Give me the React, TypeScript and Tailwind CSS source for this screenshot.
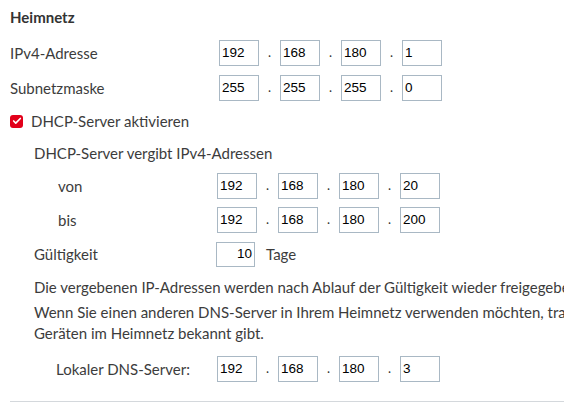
import { Check } from "lucide-react";

const font = { fontFamily: "Lato, 'Open Sans', sans-serif" };

function IpInputs({ parts, className = "" }: { parts: string[]; className?: string }) {
  return (
    <div className={`flex items-center ${className}`}>
      {parts.map((p, i) => (
        <div key={i} className="flex items-center">
          {i > 0 && <span className="w-[21px] text-center text-[13px] text-[#333]">.</span>}
          <div className="w-[40px] h-[26px] border border-[#a9b8c4] bg-white flex items-center pl-[2px] font-['Liberation_Sans',sans-serif] text-[13.5px] text-black">
            {p}
          </div>
        </div>
      ))}
    </div>
  );
}

export default function App() {
  return (
    <div
      className="w-[564px] h-[407px] overflow-hidden bg-white text-[15px] text-[#3c3c3c] font-['Lato','Open_Sans',sans-serif]"
      style={font}
    >
      <div className="pl-[10px] pt-[6px]">
        <div className="h-[22px] flex items-center font-bold text-[#333]">Heimnetz</div>

        <div className="mt-[12px] flex items-center h-[26px]">
          <span className="w-[209px]">IPv4-Adresse</span>
          <IpInputs parts={["192", "168", "180", "1"]} />
        </div>
        <div className="mt-[9px] flex items-center h-[26px]">
          <span className="w-[209px]">Subnetzmaske</span>
          <IpInputs parts={["255", "255", "255", "0"]} />
        </div>

        <div className="mt-[8px] flex items-center h-[24px]">
          <span className="w-[13px] h-[13px] rounded-[3px] bg-[#e2001a] flex items-center justify-center">
            <Check size={10} strokeWidth={4} className="text-white" />
          </span>
          <span className="ml-[8px]">DHCP-Server aktivieren</span>
        </div>

        <div className="pl-[24px]">
          <div className="mt-[9px] h-[22px] flex items-center">DHCP-Server vergibt IPv4-Adressen</div>

          <div className="mt-[9px] flex items-center h-[26px]">
            <span className="w-[183px] pl-[24px]">von</span>
            <IpInputs parts={["192", "168", "180", "20"]} />
          </div>
          <div className="mt-[8px] flex items-center h-[26px]">
            <span className="w-[183px] pl-[24px]">bis</span>
            <IpInputs parts={["192", "168", "180", "200"]} />
          </div>

          <div className="mt-[9px] flex items-center h-[25px]">
            <span className="w-[182px]">Gültigkeit</span>
            <div className="w-[39px] h-[25px] border border-[#a9b8c4] flex items-center justify-end pr-[2px] font-['Liberation_Sans',sans-serif] text-[13.5px] text-black">
              10
            </div>
            <span className="ml-[11px]">Tage</span>
          </div>

          <p className="mt-[10px] leading-[21px] whitespace-nowrap">
            Die vergebenen IP-Adressen werden nach Ablauf der Gültigkeit wieder freigegeben.
          </p>
          <p className="mt-[4px] leading-[21px] whitespace-nowrap">
            Wenn Sie einen anderen DNS-Server in Ihrem Heimnetz verwenden möchten, tragen Sie hier dessen IPv4-Adresse ein, die der DHCP-Server den
            <br />
            Geräten im Heimnetz bekannt gibt.
          </p>

          <div className="mt-[12px] flex items-center h-[26px]">
            <span className="w-[183px] pl-[22px]">Lokaler DNS-Server:</span>
            <IpInputs parts={["192", "168", "180", "3"]} />
          </div>
        </div>

        <div className="mt-[19px] border-t border-[#d4d8dc]" />
      </div>
    </div>
  );
}
